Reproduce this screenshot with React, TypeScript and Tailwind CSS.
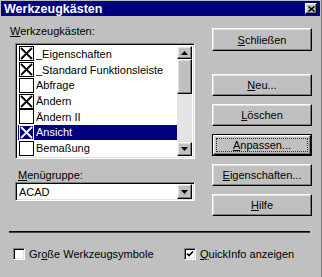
import React from "react";

const raised =
  "border border-t-white border-l-white border-b-black border-r-black shadow-[inset_-1px_-1px_#808080,inset_1px_1px_#dfdfdf]";
const sunken =
  "border border-t-[#808080] border-l-[#808080] border-b-white border-r-white shadow-[inset_1px_1px_#000,inset_-1px_-1px_#dfdfdf]";

const items = [
  { label: "_Eigenschaften", checked: true },
  { label: "_Standard Funktionsleiste", checked: true },
  { label: "Abfrage", checked: false },
  { label: "Ändern", checked: true },
  { label: "Ändern II", checked: false },
  { label: "Ansicht", checked: true, selected: true },
  { label: "Bemaßung", checked: false },
];

function ListCheck({ checked, selected }: { checked: boolean; selected?: boolean }) {
  return (
    <span
      className={`flex h-[15px] w-[15px] shrink-0 items-center justify-center border ${
        selected ? "border-white bg-[#000080]" : "border-black bg-white"
      }`}
    >
      {checked && (
        <svg width="13" height="13" viewBox="0 0 13 13">
          <path
            d="M1 1 L12 12 M12 1 L1 12"
            stroke={selected ? "#fff" : "#000"}
            strokeWidth="1.8"
          />
        </svg>
      )}
    </span>
  );
}

function Arrow({ up }: { up?: boolean }) {
  return (
    <svg width="7" height="4" viewBox="0 0 7 4">
      <path d={up ? "M3.5 0 L7 4 L0 4 Z" : "M0 0 L7 0 L3.5 4 Z"} fill="#000" />
    </svg>
  );
}

function Btn({
  children,
  h = "h-[22px]",
  mt,
  isDefault,
}: {
  children: React.ReactNode;
  h?: string;
  mt: string;
  isDefault?: boolean;
}) {
  if (isDefault) {
    return (
      <div className={`${mt} ${h} w-[100px] border border-black`}>
        <div className={`h-full w-full ${raised} flex items-center justify-center p-[2px]`}>
          <div className="flex h-full w-full items-center justify-center border border-dotted border-[#303030]">
            {children}
          </div>
        </div>
      </div>
    );
  }
  return (
    <div className={`${mt} ${h} w-[100px] ${raised} flex items-center justify-center`}>
      {children}
    </div>
  );
}

function Box3D({ checked }: { checked?: boolean }) {
  return (
    <span className={`flex h-[12px] w-[12px] items-center justify-center bg-white ${sunken}`}>
      {checked && (
        <svg width="8" height="8" viewBox="0 0 8 8">
          <path d="M1 3.5 L3 5.5 L7 1.5" stroke="#000" strokeWidth="1.6" fill="none" />
        </svg>
      )}
    </span>
  );
}

export default function App() {
  return (
    <div className="flex h-[277px] w-[322px] flex-col overflow-hidden border-r border-r-[#808080] bg-[#c0c0c0] font-['Liberation_Sans',Arial,sans-serif] text-[11px] leading-[14px] text-black">
      {/* title bar */}
      <div className="mx-[1px] mt-[1px] flex h-[15px] items-center justify-between bg-[#000080] pl-[3px] pr-[3px]">
        <span className="text-[12.5px] font-bold text-white">Werkzeugkästen</span>
        <span className={`flex h-[11px] w-[12px] items-center justify-center bg-[#c0c0c0] ${raised}`}>
          <svg width="7" height="6" viewBox="0 0 7 6">
            <path d="M0.5 0.5 L6.5 5.5 M6.5 0.5 L0.5 5.5" stroke="#000" strokeWidth="1.5" />
          </svg>
        </span>
      </div>

      <div className="flex items-start pl-[10px] pt-[8px]">
        {/* left column */}
        <div className="flex w-[185px] flex-col">
          <div>
            <span className="underline">W</span>erkzeugkästen:
          </div>
          <div className={`ml-[5px] mt-[5px] flex h-[116px] w-[180px] bg-white p-[2px] ${sunken}`}>
            <div className="flex flex-1 flex-col">
              {items.map((it) => (
                <div
                  key={it.label}
                  className={`flex h-[16px] items-center gap-[2px] pl-[1px] ${
                    it.selected ? "bg-[#000080] text-white" : ""
                  }`}
                >
                  <ListCheck checked={it.checked} selected={it.selected} />
                  <span>{it.label}</span>
                </div>
              ))}
            </div>
            <div className="flex w-[15px] flex-col bg-[#e4e4e4]">
              <div className={`flex h-[13px] items-center justify-center bg-[#c0c0c0] ${raised}`}>
                <Arrow up />
              </div>
              <div className={`h-[35px] bg-[#c0c0c0] ${raised}`} />
              <div className="flex-1" />
              <div className={`flex h-[14px] items-center justify-center bg-[#c0c0c0] ${raised}`}>
                <Arrow />
              </div>
            </div>
          </div>

          <div className="ml-[8px] mt-[9px]">
            <span className="underline">M</span>enügruppe:
          </div>
          <div className={`ml-[5px] flex h-[19px] w-[180px] items-center bg-white p-[2px] ${sunken}`}>
            <span className="flex-1 pl-[1px]">ACAD</span>
            <div className={`flex h-[15px] w-[15px] items-center justify-center bg-[#c0c0c0] ${raised}`}>
              <Arrow />
            </div>
          </div>
        </div>

        {/* right column */}
        <div className="ml-[17px] flex flex-col">
          <Btn mt="mt-[4px]" h="h-[23px]">
            <span>
              <span className="underline">S</span>chließen
            </span>
          </Btn>
          <Btn mt="mt-[23px]">
            <span>
              <span className="underline">N</span>eu...
            </span>
          </Btn>
          <Btn mt="mt-[8px]">
            <span>
              <span className="underline">L</span>öschen
            </span>
          </Btn>
          <Btn mt="mt-[8px]" isDefault>
            <span>
              <span className="underline">A</span>npassen...
            </span>
          </Btn>
          <Btn mt="mt-[8px]">
            <span>
              <span className="underline">E</span>igenschaften...
            </span>
          </Btn>
          <Btn mt="mt-[8px]">
            <span>
              <span className="underline">H</span>ilfe
            </span>
          </Btn>
        </div>
      </div>

      {/* separator */}
      <div className="mx-[9px] mt-[15px] h-[2px] w-[301px] border-t border-t-black border-b border-b-[#404040]" />

      {/* bottom options */}
      <div className="mt-[14px] flex items-center">
        <div className="ml-[13px] flex w-[171px] items-center gap-[4px]">
          <Box3D />
          <span>
            Gr<span className="underline">o</span>ße Werkzeugsymbole
          </span>
        </div>
        <div className="flex items-center gap-[4px]">
          <Box3D checked />
          <span>
            <span className="underline">Q</span>uickInfo anzeigen
          </span>
        </div>
      </div>
    </div>
  );
}
